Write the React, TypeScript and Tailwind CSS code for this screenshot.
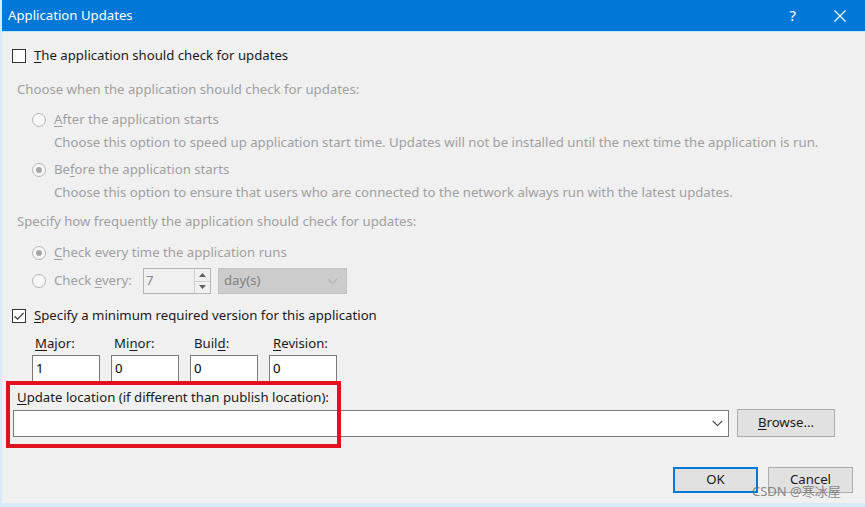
import React from 'react';

const font = { fontFamily: '"Noto Sans", "Noto Sans CJK SC", sans-serif' };

function U({ children }: { children: React.ReactNode }) {
  return <span className="underline underline-offset-2 decoration-1">{children}</span>;
}

function CheckBox({ checked }: { checked?: boolean }) {
  return (
    <div className="w-[14px] h-[14px] border border-[#333333] bg-white flex items-center justify-center shrink-0">
      {checked && (
        <svg width="12" height="12" viewBox="0 0 12 12" fill="none">
          <path d="M1.5 6.2 L4.6 9.2 L10.6 2.8" stroke="#333333" strokeWidth="1.2" />
        </svg>
      )}
    </div>
  );
}

function Radio({ checked }: { checked?: boolean }) {
  return (
    <div className="w-[14px] h-[14px] rounded-full border border-[#b5b5b5] bg-[#f7f7f7] flex items-center justify-center shrink-0">
      {checked && <div className="w-[6px] h-[6px] rounded-full bg-[#a8a8a8]" />}
    </div>
  );
}

function Chevron({ color }: { color: string }) {
  return (
    <svg width="11" height="7" viewBox="0 0 11 7" fill="none">
      <path d="M0.8 1 L5.5 5.6 L10.2 1" stroke={color} strokeWidth="1.1" />
    </svg>
  );
}

function VersionBox({ value }: { value: string }) {
  return (
    <div className="w-[68px] h-[27px] bg-white border border-[#7a7a7a] flex items-center px-[3px] text-black">
      {value}
    </div>
  );
}

export default function App() {
  return (
    <div
      className="w-[865px] h-[507px] bg-[#f0f0f0] flex flex-col relative overflow-hidden border-l-2 border-b-4 border-[#d6ebf8] whitespace-nowrap text-[13.2px]"
      style={font}
    >
      <div className="h-[32px] bg-[#0078d7] flex items-center pl-[6px] text-white text-[13.2px] shrink-0 border-b border-[#bfe3f7]">
        <span className="flex-1">Application Updates</span>
        <span className="text-[15px] mr-[38px]">?</span>
        <svg width="12" height="12" viewBox="0 0 12 12" className="mr-[19px]" fill="none">
          <path d="M0.5 0.5 L11.5 11.5 M11.5 0.5 L0.5 11.5" stroke="white" strokeWidth="1.2" />
        </svg>
      </div>

      <div className="flex flex-col pl-[10px] pt-[12px]">
        <div className="h-[24px] flex items-center gap-[8px] text-[#1a1a1a]">
          <CheckBox />
          <span>
            <U>T</U>he application should check for updates
          </span>
        </div>

        <div className="h-[24px] mt-[10px] flex items-center pl-[5px] text-[#a0a0a0]">
          Choose when the application should check for updates:
        </div>

        <div className="pl-[20px] text-[#a0a0a0]">
          <div className="h-[24px] mt-[6px] flex items-center gap-[8px]">
            <Radio />
            <span>
              <U>A</U>fter the application starts
            </span>
          </div>
          <div className="h-[22px] flex items-center pl-[22px]">
            Choose this option to speed up application start time. Updates will not be installed until the next time the application is run.
          </div>
          <div className="h-[24px] mt-[4px] flex items-center gap-[8px]">
            <Radio checked />
            <span>
              Be<U>f</U>ore the application starts
            </span>
          </div>
          <div className="h-[22px] flex items-center pl-[22px]">
            Choose this option to ensure that users who are connected to the network always run with the latest updates.
          </div>
        </div>

        <div className="h-[24px] mt-[6px] flex items-center pl-[5px] text-[#a0a0a0]">
          Specify how frequently the application should check for updates:
        </div>

        <div className="pl-[20px] text-[#a0a0a0]">
          <div className="h-[24px] mt-[7px] flex items-center gap-[8px]">
            <Radio checked />
            <span>
              <U>C</U>heck every time the application runs
            </span>
          </div>
          <div className="h-[26px] mt-[3px] flex items-center">
            <Radio />
            <span className="ml-[8px] w-[89px]">
              Check <U>e</U>very:
            </span>
            <div className="w-[68px] h-[26px] border border-[#b5b5b5] bg-[#f0f0f0] flex items-center">
              <span className="flex-1 pl-[2px] text-[#8a8a8a]">7</span>
              <div className="w-[16px] h-full flex flex-col border-l border-[#d0d0d0]">
                <div className="flex-1 flex items-center justify-center border-b border-[#d0d0d0]">
                  <svg width="7" height="4" viewBox="0 0 7 4">
                    <path d="M0 4 L3.5 0 L7 4 Z" fill="#606060" />
                  </svg>
                </div>
                <div className="flex-1 flex items-center justify-center">
                  <svg width="7" height="4" viewBox="0 0 7 4">
                    <path d="M0 0 L3.5 4 L7 0 Z" fill="#606060" />
                  </svg>
                </div>
              </div>
            </div>
            <div className="ml-[7px] w-[129px] h-[26px] bg-[#cccccc] border border-[#c2c2c2] flex items-center pl-[5px] pr-[8px] text-[#838383]">
              <span className="flex-1">day(s)</span>
              <Chevron color="#b0b0b0" />
            </div>
          </div>
        </div>

        <div className="h-[24px] mt-[10px] flex items-center gap-[8px] text-[#1a1a1a]">
          <CheckBox checked />
          <span>
            <U>S</U>pecify a minimum required version for this application
          </span>
        </div>

        <div className="pl-[20px] text-[#1a1a1a]">
          <div className="h-[20px] mt-[6px] flex items-center gap-[11px]">
            <span className="w-[68px] pl-[3px]">
              <U>M</U>ajor:
            </span>
            <span className="w-[69px] pl-[3px]">
              Mi<U>n</U>or:
            </span>
            <span className="w-[69px] pl-[3px]">
              Buil<U>d</U>:
            </span>
            <span className="w-[68px] pl-[2px]">
              <U>R</U>evision:
            </span>
          </div>
          <div className="h-[27px] mt-[1px] flex items-center gap-[11px]">
            <VersionBox value="1" />
            <VersionBox value="0" />
            <VersionBox value="0" />
            <VersionBox value="0" />
          </div>
        </div>

        <div className="h-[20px] mt-[6px] flex items-center pl-[5px] text-[#1a1a1a]">
          <span>
            <U>U</U>pdate location (if different than publish location):
          </span>
        </div>

        <div className="h-[28px] mt-[1px] flex items-center text-[#1a1a1a]">
          <div className="w-[716px] h-[27px] ml-[1px] bg-white border border-[#7a7a7a] flex items-center justify-end pr-[5px]">
            <Chevron color="#404040" />
          </div>
          <div className="ml-[8px] w-[98px] h-[28px] bg-[#e1e1e1] border border-[#adadad] flex items-center justify-center">
            <span>
              <U>B</U>rowse...
            </span>
          </div>
        </div>

        <div className="mt-[30px] flex justify-end gap-[10px] pr-[12px] text-[#1a1a1a]">
          <div className="w-[85px] h-[26px] bg-[#e1e1e1] border-2 border-[#0078d7] flex items-center justify-center">
            OK
          </div>
          <div className="w-[85px] h-[26px] bg-[#e1e1e1] border border-[#adadad] flex items-center justify-center">
            Cancel
          </div>
        </div>
      </div>

      <div className="absolute left-[4px] top-[381px] w-[335px] h-[67px] border-[4px] border-[#e3101e] pointer-events-none" />

      <div className="absolute left-[750px] top-[482px] text-[13px] text-[#6f6f6f] opacity-80 pointer-events-none">
        CSDN @寒冰屋
      </div>
    </div>
  );
}
